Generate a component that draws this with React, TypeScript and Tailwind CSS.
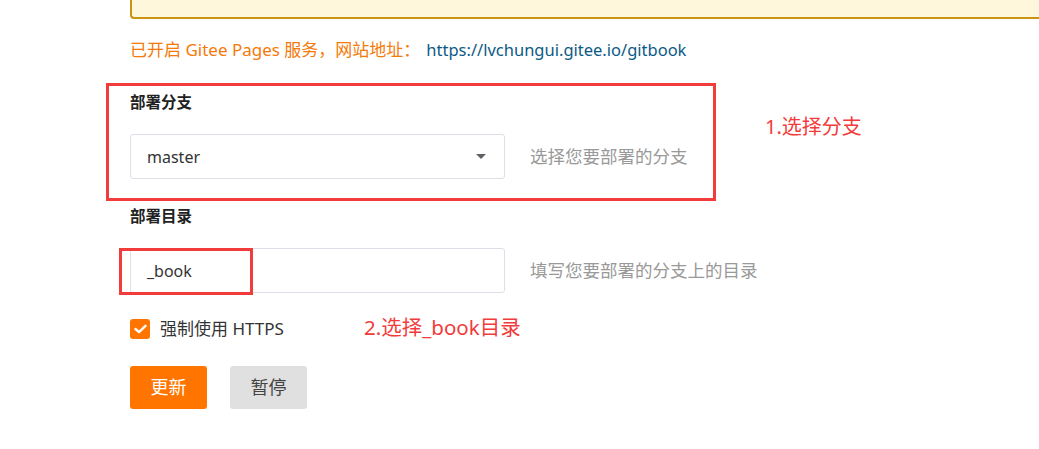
import React from 'react'

const font = { fontFamily: '"Noto Sans", "Noto Sans CJK SC", sans-serif' }

const Caret = () => (
  <svg width="10" height="6" viewBox="0 0 10 6" className="absolute right-[18px] top-1/2 -translate-y-1/2">
    <path d="M0 0 L10 0 L5 5 Z" fill="#5f6368" />
  </svg>
)

export default function App() {
  return (
    <div className="relative w-[1039px] h-[449px] overflow-hidden bg-white text-[#333]" style={font}>
      {/* notice box cut off at top */}
      <div className="ml-[130px] h-[19px] bg-[#fff7db] border-l-2 border-b-2 border-[#c99411] rounded-bl-[4px]" />

      <div className="pl-[130px]">
        <p className="mt-[19px] text-[17px] leading-[24px] text-[#f47a0a]">
          已开启 Gitee Pages 服务，网站地址：
          <span className="ml-[6px] text-[16.5px] text-[#0b5a86]">https://lvchungui.gitee.io/gitbook</span>
        </p>

        {/* branch */}
        <div className="mt-[30px] text-[15.5px] leading-[20px] font-bold text-[#222]">部署分支</div>
        <div className="mt-[22px] flex items-center">
          <div className="relative w-[375px] h-[45px] border border-[#dcdfe6] rounded-[3px] flex items-center pl-[16px] text-[16px] text-[#333]">
            master
            <Caret />
          </div>
          <span className="ml-[25px] text-[17.5px] text-[#999]">选择您要部署的分支</span>
        </div>

        {/* directory */}
        <div className="mt-[27px] text-[15.5px] leading-[20px] font-bold text-[#222]">部署目录</div>
        <div className="mt-[22px] flex items-center">
          <div className="w-[375px] h-[45px] border border-[#dcdfe6] rounded-[3px] flex items-center pl-[16px] text-[16px] text-[#333]">
            _book
          </div>
          <span className="ml-[25px] text-[17.5px] text-[#999]">填写您要部署的分支上的目录</span>
        </div>

        {/* https */}
        <div className="mt-[24px] flex items-center h-[24px]">
          <span className="w-[20px] h-[20px] rounded-[3px] bg-[#ff7500] flex items-center justify-center">
            <svg width="13" height="10" viewBox="0 0 13 10">
              <path d="M1.5 5 L5 8.2 L11.5 1.8" stroke="#fff" strokeWidth="2.4" fill="none" strokeLinecap="round" strokeLinejoin="round" />
            </svg>
          </span>
          <span className="ml-[10px] text-[17px] text-[#333]">强制使用 HTTPS</span>
        </div>

        {/* buttons */}
        <div className="mt-[25px] flex gap-[23px]">
          <button className="w-[77px] h-[43px] rounded-[3px] bg-[#ff7500] text-white text-[18px]">更新</button>
          <button className="w-[77px] h-[43px] rounded-[3px] bg-[#e0e0e0] text-[#444] text-[18px]">暂停</button>
        </div>
      </div>

      {/* annotations */}
      <div className="absolute left-[106px] top-[83px] w-[610px] h-[118px] border-[3px] border-[#f23b3b]" />
      <div className="absolute left-[765px] top-[113px] text-[20px] leading-[28px] text-[#f23b3b]">1.选择分支</div>
      <div className="absolute left-[119px] top-[248px] w-[134px] h-[47px] border-[3px] border-[#f23b3b]" />
      <div className="absolute left-[364px] top-[313px] text-[20.5px] leading-[28px] text-[#f23b3b]">2.选择_book目录</div>
    </div>
  )
}
